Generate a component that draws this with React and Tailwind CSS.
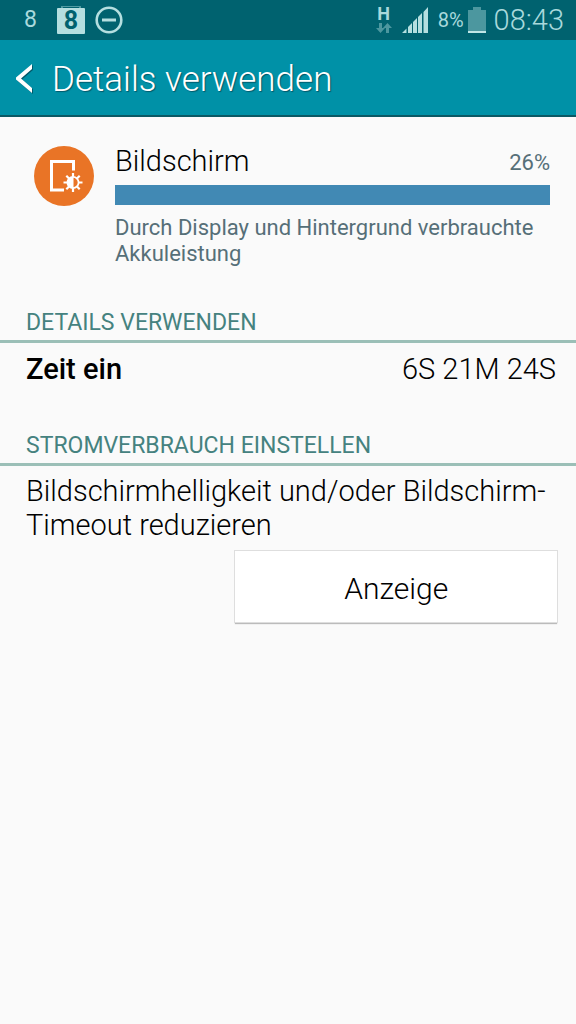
function StatusBar() {
  return (
    <div className="flex h-10 items-center justify-between bg-[#00626f] pl-6 pr-3 text-[#a9d9dc]">
      <div className="flex items-center gap-2.5">
        <span className="mr-2.5 text-[23px] leading-6">8</span>

        {/* calendar notification */}
        <svg viewBox="0 0 28 28" className="h-7 w-7" aria-hidden="true">
          <path d="M5 2V0h18v2" fill="none" stroke="#4f9ba2" strokeWidth="2" />
          <rect y="2" width="28" height="26" rx="1" fill="#b5dfe0" />
          <text x="14" y="23" textAnchor="middle" fill="#00626f" className="text-[25px] font-bold">
            8
          </text>
        </svg>

        <svg viewBox="0 0 28 28" className="h-7 w-7" aria-hidden="true">
          <circle cx="14" cy="14" r="12.300" fill="none" stroke="#b5dfe0" strokeWidth="2.600" />
          <path d="M7 14h14" stroke="#b5dfe0" strokeWidth="3" />
        </svg>
      </div>

      <div className="flex items-center">
        <div className="mr-2.5 flex w-4 flex-col items-center">
          <span className="text-lg leading-4 font-bold">H</span>
          <svg viewBox="0 0 16 12" className="h-3 w-4" fill="#4c979f" aria-hidden="true">
            <path d="M3 1h3v5h3l-4.500 5L0 6h3z" />
            <path d="M10 11h3V6h3l-4.500-5L7 6h3z" />
          </svg>
        </div>

        <svg viewBox="0 0 26 26" className="mr-2.5 h-[26px] w-[26px]" fill="#b5dfe0" aria-hidden="true">
          <path d="M0 26l4.500-4.500V26zM6 20l4-4v10H6zM11 15l4-4v15h-4zM16 10l4-4v20h-4zM21.500 5L26 0v26h-4.500z" />
        </svg>

        <span className="mr-1 text-xl leading-6">8%</span>

        <svg viewBox="0 0 18 26" className="mr-2 h-[26px] w-[18px]" aria-hidden="true">
          <path d="M0 3h5V0h8v3h5v21H0z" fill="#4c979f" />
          <path d="M0 24h18v2H0z" fill="#c0e6e6" />
        </svg>

        <span className="text-[29px] leading-8 font-light">08:43</span>
      </div>
    </div>
  );
}

function Header() {
  return (
    <header className="flex h-[77px] items-center border-b-2 border-[#0b5965] bg-[#0091a7] pl-4 text-white">
      <button type="button" aria-label="Zurück" className="mr-5">
        <svg viewBox="0 0 16 30" className="h-[30px] w-4 drop-shadow-[1px_1px_0_#00596a]" aria-hidden="true">
          <path d="M16 1v5L5 15.500l11 9.500v5L0 16.500v-2z" fill="#fff" />
        </svg>
      </button>
      <h1 className="pt-1 text-[35px] leading-10 font-light text-shadow-[1px_1px_1px_#00596a]">
        Details verwenden
      </h1>
    </header>
  );
}

function DisplayIcon() {
  return (
    <svg viewBox="0 0 60 60" className="h-[60px] w-[60px]" aria-hidden="true">
      <circle cx="30" cy="30" r="30" fill="#e97426" />
      <path d="M39.500 24.500V15.500H17.500v28.500H30" fill="none" stroke="#fff" strokeWidth="3" />
      <g stroke="#fff" strokeWidth="2.200">
        <path d="M39 27v19M29.500 36.500h19M32.300 29.800l13.400 13.400M45.700 29.800L32.300 43.200" />
      </g>
      <circle cx="39" cy="36.500" r="5.600" fill="#e97426" stroke="#fff" strokeWidth="1.800" />
      <path d="M39.500 30.500a6 6 0 0 0 0 12z" fill="#fff" />
    </svg>
  );
}

function SectionTitle({ children }) {
  return (
    <h2 className="border-b-3 border-[#9bbfb7] px-[26px] pb-[3px] text-[23px] leading-7 text-[#45827f]">
      {children}
    </h2>
  );
}

export default function App() {
  return (
    <div className="min-h-screen bg-[#fafafa] font-[Roboto,sans-serif] text-black">
      <StatusBar />
      <Header />

      <main>
        {/* usage */}
        <section className="flex pt-7 pr-[26px] pl-[34px]">
          <div className="mr-[21px] shrink-0 pt-px">
            <DisplayIcon />
          </div>
          <div className="grow">
            <div className="flex items-end justify-between">
              <span className="text-[29px] leading-8 font-light">Bildschirm</span>
              <span className="text-[22px] leading-7 text-[#566f78]">26%</span>
            </div>
            <div className="mt-2 h-5 bg-[#4189b4]" />
            <p className="mt-[10px] text-[22px] leading-[26px] text-[#566f78]">
              Durch Display und Hintergrund verbrauchte Akkuleistung
            </p>
          </div>
        </section>

        <section className="mt-[42px]">
          <SectionTitle>DETAILS VERWENDEN</SectionTitle>
          <dl className="flex justify-between pt-2 pr-5 pl-[26px] text-[29px] leading-9">
            <dt className="font-medium">Zeit ein</dt>
            <dd className="font-light">6S 21M 24S</dd>
          </dl>
        </section>

        <section className="mt-[45px]">
          <SectionTitle>STROMVERBRAUCH EINSTELLEN</SectionTitle>
          <p className="px-[26px] pt-2 text-[29px] leading-[34px] font-light">
            Bildschirmhelligkeit und/oder Bildschirm-Timeout reduzieren
          </p>
          <div className="mt-2 flex justify-end pr-[18px]">
            <button
              type="button"
              className="h-[73px] w-[58%] border border-[#dedede] bg-white pt-1 text-[30px] font-light shadow-[0_2px_1px_-1px_#bbb]"
            >
              Anzeige
            </button>
          </div>
        </section>
      </main>
    </div>
  );
}
